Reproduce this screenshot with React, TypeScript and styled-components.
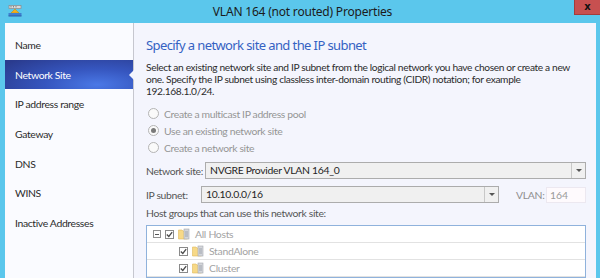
import React from "react";
import styled, { createGlobalStyle } from "styled-components";

const GlobalStyle = createGlobalStyle`
  html, body { margin: 0; padding: 0; overflow: hidden; }
  body { font-family: "Lato", "Noto Sans", sans-serif; }
  * { box-sizing: border-box; }
`;

const Window = styled.div`
  width: 600px;
  height: 278px;
  background: #5bc7ec;
  display: flex;
  flex-direction: column;
  padding: 0 4px 0 5px;
  overflow: hidden;
`;

const TitleBar = styled.div`
  height: 23px;
  flex: 0 0 23px;
  display: grid;
  grid-template-columns: 1fr auto 1fr;
  align-items: start;
  margin-right: -4px;
`;

const AppIcon = styled.div`
  padding: 5px 0 0 3px;
  display: flex;
`;

const Title = styled.div`
  font-family: "Noto Sans", sans-serif;
  font-size: 12px;
  letter-spacing: -0.2px;
  color: #1b1b1b;
  line-height: 23px;
  white-space: nowrap;
`;

const CloseButton = styled.div`
  justify-self: end;
  width: 26px;
  height: 15px;
  background: #c75050;
  border-left: 1px solid #a33c3c;
  border-bottom: 1px solid #a33c3c;
  display: flex;
  align-items: center;
  justify-content: center;
  font-family: "DejaVu Sans", sans-serif;
  font-weight: bold;
  font-size: 10px;
  color: #111;
  line-height: 1;
`;

const Body = styled.div`
  flex: 1;
  display: flex;
  min-height: 0;
`;

const Nav = styled.div`
  width: 129px;
  flex: 0 0 129px;
  background: #fafbff;
  border-right: 1px solid #c6c7cf;
  padding-top: 7px;
  display: flex;
  flex-direction: column;
`;

const NavItem = styled.div<{ $active?: boolean }>`
  position: relative;
  height: 29.7px;
  display: flex;
  align-items: center;
  padding-left: 10px;
  font-size: 10.4px;
  letter-spacing: -0.35px;
  white-space: nowrap;
  color: ${(p) => (p.$active ? "#ffffff" : "#2b2b2b")};
  background: ${(p) =>
    p.$active
      ? "radial-gradient(ellipse 90% 120% at 72% 85%, #4a78e6 0%, #3656bf 45%, #2a3b8e 100%)"
      : "transparent"};
`;

const Notch = styled.span`
  position: absolute;
  right: -1px;
  top: 50%;
  margin-top: -5px;
  width: 0;
  height: 0;
  border-top: 5px solid transparent;
  border-bottom: 5px solid transparent;
  border-right: 5px solid #f4f5fd;
`;

const Content = styled.div`
  flex: 1;
  background: #f4f5fd;
  padding: 13px 10px 0 12px;
  display: flex;
  flex-direction: column;
  min-width: 0;
`;

const Heading = styled.div`
  font-family: "Noto Sans", sans-serif;
  font-size: 13px;
  letter-spacing: -0.6px;
  color: #3462c3;
  line-height: 18px;
  margin-bottom: 7px;
  white-space: nowrap;
`;

const Description = styled.div`
  font-size: 10.2px;
  line-height: 12px;
  color: #2c2c2c;
  letter-spacing: -0.35px;
  margin-bottom: 10px;
  white-space: nowrap;
`;

const RadioGroup = styled.div`
  display: flex;
  flex-direction: column;
  gap: 4px;
  padding-left: 2px;
  margin-bottom: 8px;
`;

const RadioRow = styled.label`
  display: flex;
  align-items: center;
  gap: 5px;
  height: 13px;
  font-size: 10.4px;
  letter-spacing: -0.35px;
  color: #959595;
  white-space: nowrap;
`;

const RadioCircle = styled.span<{ $checked?: boolean }>`
  width: 11px;
  height: 11px;
  border-radius: 50%;
  border: 1px solid #b4b4b4;
  background: #fafafa;
  display: flex;
  align-items: center;
  justify-content: center;
  &::after {
    content: "";
    width: 5px;
    height: 5px;
    border-radius: 50%;
    background: ${(p) => (p.$checked ? "#7a7a7a" : "transparent")};
  }
`;

const FieldGroup = styled.div`
  display: flex;
  flex-direction: column;
  gap: 7px;
  margin-bottom: 4px;
`;

const FieldRow = styled.div`
  display: flex;
  align-items: center;
  height: 17px;
`;

const FieldLabel = styled.div<{ $width: number }>`
  width: ${(p) => p.$width}px;
  flex: 0 0 ${(p) => p.$width}px;
  font-size: 10.4px;
  color: #555;
  letter-spacing: -0.35px;
  white-space: nowrap;
`;

const Combo = styled.div<{ $width: number }>`
  width: ${(p) => p.$width}px;
  flex: 0 0 ${(p) => p.$width}px;
  height: 17px;
  border: 1px solid #acacac;
  background: #f0f0f0;
  display: flex;
  align-items: stretch;
`;

const ComboText = styled.div`
  flex: 1;
  padding-left: 4px;
  font-size: 10.4px;
  line-height: 15px;
  color: #1e1e1e;
  letter-spacing: -0.3px;
  white-space: nowrap;
  overflow: hidden;
`;

const ComboArrow = styled.div`
  width: 14px;
  border-left: 1px solid #c8c8c8;
  display: flex;
  align-items: center;
  justify-content: center;
  &::after {
    content: "";
    border-left: 3px solid transparent;
    border-right: 3px solid transparent;
    border-top: 3px solid #555;
  }
`;

const VlanLabel = styled.div`
  margin-left: 17px;
  width: 30px;
  flex: 0 0 30px;
  font-size: 10.4px;
  letter-spacing: -0.3px;
  color: #8e8e8e;
  white-space: nowrap;
`;

const VlanInput = styled.div`
  width: 40px;
  height: 16px;
  border: 1px solid #ece8f0;
  background: #fefafd;
  font-size: 10.4px;
  line-height: 14px;
  color: #9a9a9a;
  padding-left: 3px;
`;

const SectionLabel = styled.div`
  font-size: 10.4px;
  line-height: 13px;
  color: #555;
  letter-spacing: -0.35px;
  margin-bottom: 5px;
  white-space: nowrap;
`;

const TreeBox = styled.div`
  width: 440px;
  border: 1px solid #8fb2dc;
  background: #ffffff;
  display: flex;
  flex-direction: column;
`;

const TreeRow = styled.div<{ $level: number }>`
  height: 17px;
  flex: 0 0 17px;
  display: flex;
  align-items: center;
  gap: 4px;
  padding-left: ${(p) => (p.$level === 0 ? 6 : 32)}px;
  border-bottom: 1px solid #e2e2e2;
  font-size: 10.4px;
  letter-spacing: -0.3px;
  color: #a3a3a3;
  white-space: nowrap;
`;

const Expander = styled.span`
  width: 8px;
  height: 8px;
  border: 1px solid #8f8f8f;
  position: relative;
  &::after {
    content: "";
    position: absolute;
    left: 1px;
    right: 1px;
    top: 2.5px;
    height: 1px;
    background: #555;
  }
`;

const CheckBox = styled.span`
  width: 9px;
  height: 9px;
  border: 1px solid #8a8a8a;
  background: #fff;
  display: flex;
  align-items: center;
  justify-content: center;
`;

const TreeLabel = styled.span`
  margin-left: 1px;
`;

const NetIcon = () => (
  <svg width="14" height="12" viewBox="0 0 14 12">
    <rect x="1" y="0.5" width="12" height="3" fill="#d8d8d8" stroke="#8a8a8a" strokeWidth="0.7" />
    <rect x="2.5" y="1.3" width="1" height="1" fill="#666" />
    <rect x="5" y="1.3" width="1" height="1" fill="#666" />
    <rect x="7.5" y="1.3" width="1" height="1" fill="#666" />
    <path d="M3 8 L7 4 L11 8 Z" fill="#f2b01e" stroke="#c98a00" strokeWidth="0.5" />
    <rect x="0.5" y="8" width="13" height="3" fill="#3f7fcf" />
    <rect x="0.5" y="10.5" width="13" height="1" fill="#2a5ea8" />
  </svg>
);

const Check = () => (
  <svg width="7" height="7" viewBox="0 0 7 7">
    <path d="M0.8 3.5 L2.8 5.5 L6.2 1.2" fill="none" stroke="#4a4a4a" strokeWidth="1.3" />
  </svg>
);

const Folder = () => (
  <svg width="12" height="12" viewBox="0 0 12 12">
    <path d="M0.5 2 H4 L5 3 H9.5 V11 H0.5 Z" fill="#f7d987" stroke="#e0bb5a" strokeWidth="0.6" />
    <rect x="6" y="1" width="5" height="10" fill="#d4d6da" stroke="#a5a9b0" strokeWidth="0.6" />
    <rect x="7" y="3" width="3" height="6" fill="#b9bdc4" />
  </svg>
);

const navItems = [
  "Name",
  "Network Site",
  "IP address range",
  "Gateway",
  "DNS",
  "WINS",
  "Inactive Addresses",
];

const treeItems = [
  { label: "All Hosts", level: 0 },
  { label: "StandAlone", level: 1 },
  { label: "Cluster", level: 1 },
];

export default function App() {
  return (
    <>
      <GlobalStyle />
      <Window>
        <TitleBar>
          <AppIcon>
            <NetIcon />
          </AppIcon>
          <Title>VLAN 164 (not routed) Properties</Title>
          <CloseButton>x</CloseButton>
        </TitleBar>
        <Body>
          <Nav>
            {navItems.map((item) => (
              <NavItem key={item} $active={item === "Network Site"}>
                {item}
                {item === "Network Site" && <Notch />}
              </NavItem>
            ))}
          </Nav>
          <Content>
            <Heading>Specify a network site and the IP subnet</Heading>
            <Description>
              Select an existing network site and IP subnet from the logical network you have chosen or create a new
              <br />
              one. Specify the IP subnet using classless inter-domain routing (CIDR) notation; for example
              <br />
              192.168.1.0/24.
            </Description>
            <RadioGroup>
              <RadioRow>
                <RadioCircle />
                Create a multicast IP address pool
              </RadioRow>
              <RadioRow>
                <RadioCircle $checked />
                Use an existing network site
              </RadioRow>
              <RadioRow>
                <RadioCircle />
                Create a network site
              </RadioRow>
            </RadioGroup>
            <FieldGroup>
              <FieldRow>
                <FieldLabel $width={59}>Network site:</FieldLabel>
                <Combo $width={381}>
                  <ComboText>NVGRE Provider VLAN 164_0</ComboText>
                  <ComboArrow />
                </Combo>
              </FieldRow>
              <FieldRow>
                <FieldLabel $width={55}>IP subnet:</FieldLabel>
                <Combo $width={298}>
                  <ComboText>10.10.0.0/16</ComboText>
                  <ComboArrow />
                </Combo>
                <VlanLabel>VLAN:</VlanLabel>
                <VlanInput>164</VlanInput>
              </FieldRow>
            </FieldGroup>
            <SectionLabel>Host groups that can use this network site:</SectionLabel>
            <TreeBox>
              {treeItems.map((t) => (
                <TreeRow key={t.label} $level={t.level}>
                  {t.level === 0 && <Expander />}
                  <CheckBox>
                    <Check />
                  </CheckBox>
                  <Folder />
                  <TreeLabel>{t.label}</TreeLabel>
                </TreeRow>
              ))}
            </TreeBox>
          </Content>
        </Body>
      </Window>
    </>
  );
}
